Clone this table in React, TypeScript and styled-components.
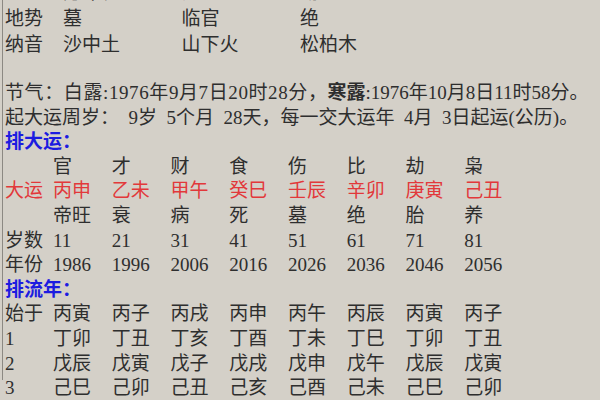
import React from "react";
import styled, { createGlobalStyle } from "styled-components";

const Global = createGlobalStyle`
  html, body { margin: 0; padding: 0; background: #d4d0c8; }
  body { font-family: "Liberation Serif", "Noto Sans CJK SC", serif; }
`;

const Page = styled.div`
  width: 600px;
  height: 400px;
  overflow: hidden;
  background: #d4d0c8;
  color: #2e2e2e;
  font-family: "Liberation Serif", "Noto Sans CJK SC", serif;
  font-size: 19px;
`;

const Panel = styled.div`
  margin-left: 2px;
  height: 100%;
  border-left: 1px solid #8c8983;
  padding-left: 2px;
`;

const TopGrid = styled.div`
  display: grid;
  grid-template-columns: 58px repeat(3, 118.5px);
  grid-auto-rows: 26px;
  line-height: 26px;
  margin-top: -20px;
`;

const Table = styled.div`
  display: grid;
  grid-template-columns: 48px repeat(8, 58.75px);
  grid-auto-rows: 24.6px;
  line-height: 24.6px;
`;

const Cell = styled.div<{ $tone?: "red" }>`
  white-space: nowrap;
  color: ${(p) => (p.$tone === "red" ? "#e2383a" : "inherit")};
`;

const Info = styled.div`
  margin-top: 23px;
  line-height: 24.6px;
`;

const Line = styled.div`
  white-space: pre;
  word-spacing: 4.75px;
`;

const Spread = styled.span`
  letter-spacing: 0.6px;
`;

const Strong = styled.span`
  font-weight: 700;
`;

const SectionTitle = styled.div`
  color: #1c1ce0;
  font-weight: 700;
  line-height: 24.6px;
  height: 24.6px;
`;

const topRows: [string, string[]][] = [
  ["", ["方印长", "比", "劫"]],
  ["地势", ["墓", "临官", "绝"]],
  ["纳音", ["沙中土", "山下火", "松柏木"]],
];

const dayunRows: { label: string; cells: string[]; tone?: "red" }[] = [
  { label: "", cells: ["官", "才", "财", "食", "伤", "比", "劫", "枭"] },
  { label: "大运", cells: ["丙申", "乙未", "甲午", "癸巳", "壬辰", "辛卯", "庚寅", "己丑"], tone: "red" },
  { label: "", cells: ["帝旺", "衰", "病", "死", "墓", "绝", "胎", "养"] },
  { label: "岁数", cells: ["11", "21", "31", "41", "51", "61", "71", "81"] },
  { label: "年份", cells: ["1986", "1996", "2006", "2016", "2026", "2036", "2046", "2056"] },
];

const liunianRows: { label: string; cells: string[] }[] = [
  { label: "始于", cells: ["丙寅", "丙子", "丙戌", "丙申", "丙午", "丙辰", "丙寅", "丙子"] },
  { label: "1", cells: ["丁卯", "丁丑", "丁亥", "丁酉", "丁未", "丁巳", "丁卯", "丁丑"] },
  { label: "2", cells: ["戊辰", "戊寅", "戊子", "戊戌", "戊申", "戊午", "戊辰", "戊寅"] },
  { label: "3", cells: ["己巳", "己卯", "己丑", "己亥", "己酉", "己未", "己巳", "己卯"] },
];

export default function App() {
  return (
    <Page>
      <Global />
      <Panel>
        <TopGrid>
          {topRows.map(([label, cells], i) => (
            <React.Fragment key={i}>
              <Cell>{label}</Cell>
              {cells.map((c, j) => (
                <Cell key={j}>{c}</Cell>
              ))}
            </React.Fragment>
          ))}
        </TopGrid>
        <Info>
          <Line>
            <Spread>节气：白露:1976年9月7日20时28分，</Spread>
            <Strong>寒露</Strong>:1976年10月8日11时58分。
          </Line>
          <Line>{"起大运周岁： 9岁 5个月 28天，每一交大运年 4月 3日起运(公历)。"}</Line>
        </Info>
        <SectionTitle>排大运：</SectionTitle>
        <Table>
          {dayunRows.map((r, i) => (
            <React.Fragment key={i}>
              <Cell $tone={r.tone}>{r.label}</Cell>
              {r.cells.map((c, j) => (
                <Cell key={j} $tone={r.tone}>
                  {c}
                </Cell>
              ))}
            </React.Fragment>
          ))}
        </Table>
        <SectionTitle>排流年：</SectionTitle>
        <Table>
          {liunianRows.map((r, i) => (
            <React.Fragment key={i}>
              <Cell>{r.label}</Cell>
              {r.cells.map((c, j) => (
                <Cell key={j}>{c}</Cell>
              ))}
            </React.Fragment>
          ))}
        </Table>
      </Panel>
    </Page>
  );
}
